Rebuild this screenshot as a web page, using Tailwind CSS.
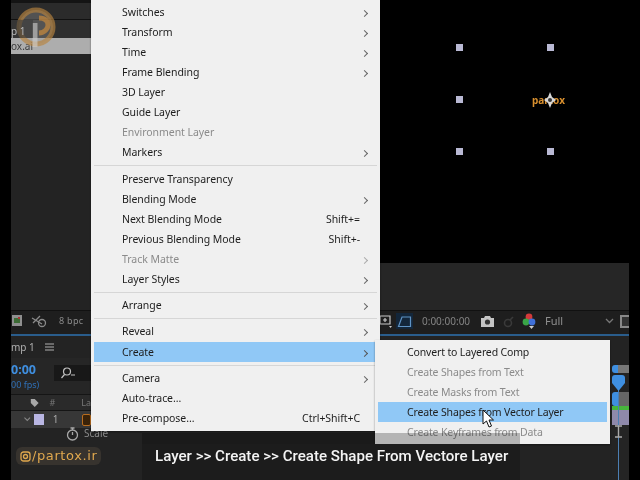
<!DOCTYPE html>
<html lang="en">
<head>
  <meta charset="UTF-8">
  <title>Layer menu</title>
  <script src="https://cdn.jsdelivr.net/npm/@tailwindcss/browser@4"></script>
</head>
<body class="bg-black">
<div class="relative w-[640px] h-[480px] overflow-hidden flex bg-black font-['Noto_Sans',sans-serif] blur-[0.3px]">
  <div class="w-[11px] shrink-0 bg-black"></div>

  <!-- After Effects window -->
  <div class="w-[618px] shrink-0 flex flex-col bg-[#232323]">
    <!-- Project panel + viewer -->
    <div class="h-[310px] flex">
      <div class="w-[80px] flex flex-col bg-[#232323]">
        <div class="h-[3px] bg-[#141414]"></div>
        <div class="h-[17px] bg-[#2b2b2b] border-b border-[#111]"></div>
        <div class="h-[18px] flex bg-[#2e2e2e]">
          <span class="relative z-10 w-[22px] bg-[#3b3b3b]/60 text-[10px] leading-[22px] text-[#bbb] whitespace-nowrap">p 1</span>
        </div>
        <div class="h-[16px] bg-[#adadad] text-[10px] leading-[17px] text-[#3c3c3c]">ox.ai</div>
      </div>
      <div class="flex-1 flex flex-col">
        <div class="relative h-[263px] bg-black">
          <div class="absolute left-[365px] top-[44px] w-[7px] h-[7px] bg-[#b9b9d4]"></div>
          <div class="absolute left-[456px] top-[44px] w-[7px] h-[7px] bg-[#b9b9d4]"></div>
          <div class="absolute left-[365px] top-[96px] w-[7px] h-[7px] bg-[#b9b9d4]"></div>
          <div class="absolute left-[365px] top-[148px] w-[7px] h-[7px] bg-[#b9b9d4]"></div>
          <div class="absolute left-[456px] top-[148px] w-[7px] h-[7px] bg-[#b9b9d4]"></div>
          <span class="absolute left-[441px] top-[93px] text-[10px] leading-[14px] font-bold text-[#d9902f]">partox</span>
          <svg class="absolute left-[453px] top-[92px]" width="12" height="16" viewBox="0 0 12 16"><path d="M6 0L8 5L12 8L8 11L6 16L4 11L0 8L4 5Z" fill="#d8d8d8"/><circle cx="6" cy="8" r="2" fill="#333"/></svg>
        </div>
        <div class="flex-1 bg-[#262626]"></div>
      </div>
    </div>

    <!-- Viewer toolbar -->
    <div class="h-[24px] flex items-center pb-[3px] bg-[#1e1e1e] border-t border-[#111] text-[#8a8a8a]">
      <div class="w-[80px] flex items-center">
        <svg width="19" height="14" viewBox="0 0 19 14"><rect x="1" y="1" width="10" height="11" fill="#8f8f8f"/><rect x="3" y="4" width="6" height="5" fill="#3c6b35"/><rect x="7" y="3" width="2" height="2" fill="#a33"/></svg>
        <svg width="17" height="14" viewBox="0 0 17 14" fill="none" stroke="#8a8a8a" stroke-width="1.3"><path d="M2 4l10 6M3 9l7-7"/><circle cx="12" cy="9" r="3.5"/></svg>
        <span class="ml-[12px] text-[9px] tracking-[0.3px] whitespace-nowrap">8 bpc</span>
      </div>
      <div class="ml-auto flex items-center h-full">
        <svg width="14" height="16" viewBox="0 0 14 16" fill="none" stroke="#c8c8c8" stroke-width="1.2"><path d="M1 3h10v8H1zM6 5v4M4 7h4"/><path d="M10 13h3l-1.5 2z" fill="#c8c8c8" stroke="none"/></svg>
        <div class="ml-[3px] w-[17px] h-[16px] bg-[#13263a] flex items-center justify-center">
          <svg width="15" height="13" viewBox="0 0 15 13" fill="none" stroke="#5f93c4" stroke-width="1.2"><path d="M1.5 11.5L5 2h8.5v9.500z"/></svg>
        </div>
        <span class="ml-[9px] w-[50px] text-[10px] text-[#838383] whitespace-nowrap">0:00:00:00</span>
        <svg class="ml-[8px]" width="15" height="13" viewBox="0 0 15 13"><path d="M1 3h3l1-2h5l1 2h3v9H1z" fill="#c4c4c4"/><circle cx="7.5" cy="7" r="2.6" fill="#333"/></svg>
        <svg class="ml-[8px]" width="13" height="13" viewBox="0 0 13 13" fill="none" stroke="#3a3a3a" stroke-width="1.6"><circle cx="5" cy="8" r="3.5"/><path d="M7 5l3-3"/></svg>
        <svg class="ml-[6px]" width="14" height="17" viewBox="0 0 14 17"><circle cx="7" cy="4" r="3.4" fill="#d33a3a"/><circle cx="4" cy="9" r="3.4" fill="#3aa547"/><circle cx="10" cy="9" r="3.4" fill="#3f6fd8"/><path d="M7 13h5l-2.5 3z" fill="#ccc"/></svg>
        <span class="ml-[9px] w-[60px] text-[11px] text-[#8f8f8f]">Full</span>
        <svg width="9" height="6" viewBox="0 0 9 6" fill="none" stroke="#777" stroke-width="1.3"><path d="M1 1l3.500 3.500L8 1"/></svg>
        <div class="ml-[6px] w-[9px] h-[13px] border-2 border-r-0 border-[#888] bg-[#333]"></div>
      </div>
    </div>
    <div class="h-[2px] bg-[#2a5d8c]"></div>

    <!-- Timeline panel -->
    <div class="flex-1 flex bg-[#232323]">
      <div class="w-[80px] flex flex-col shrink-0">
        <div class="h-[22px] flex items-center text-[10px] text-[#b0b0b0]">
          <span class="whitespace-nowrap">mp 1</span>
          <svg class="ml-[10px]" width="9" height="8" viewBox="0 0 9 8" stroke="#b0b0b0"><path d="M0 1h9M0 4h9M0 7h9"/></svg>
        </div>
        <div class="h-[36px] flex bg-[#262626]">
          <div class="w-[43px] flex flex-col">
            <span class="text-[12.5px] leading-[16px] mt-[4px] font-bold text-[#3f8fe0]">0:00</span>
            <span class="text-[9px] leading-[13px] text-[#2f6fb5] whitespace-nowrap">00 fps)</span>
          </div>
          <div class="mt-[7px] w-[37px] h-[16px] bg-[#181818] flex items-center pl-[6px]">
            <svg width="15" height="12" viewBox="0 0 15 12" fill="none" stroke="#c0c0c0" stroke-width="1.2"><circle cx="7" cy="4.500" r="3.500"/><path d="M4.500 7.500L1.500 11M11 8h4"/></svg>
          </div>
        </div>
        <div class="h-[17px] flex items-center bg-[#2a2a2a] border-y border-[#151515] text-[9px] text-[#777]">
          <svg class="ml-[19px]" width="12" height="12" viewBox="0 0 12 12"><path d="M1 1h5l5 5-5 5-5-5z" fill="#a8a8a8"/></svg>
          <span class="ml-[10px]">#</span>
          <span class="ml-[26px]">La</span>
        </div>
        <div class="h-[17px] flex items-center bg-[#373737]">
          <svg class="ml-[13px]" width="7" height="5" viewBox="0 0 7 5" fill="none" stroke="#888" stroke-width="1.1"><path d="M.5 .5l3 3 3-3"/></svg>
          <div class="ml-[3px] w-[11px] h-[11px] bg-[#b9b6e3]"></div>
          <span class="ml-[9px] text-[10px] text-[#aaa]">1</span>
          <div class="ml-[24px] w-[9px] h-[12px] rounded-[2px] bg-[#3a2208] border border-[#b86d1f]"></div>
        </div>
      </div>
      <div class="flex-1"></div>
      <div class="w-[17px] flex flex-col items-stretch relative">
        <div class="h-[29px]"></div>
        <div class="h-[8px] flex"><span class="w-[6px] bg-[#3f8fe0] rounded-l-[3px]"></span><span class="flex-1 bg-[#777]"></span></div>
        <div class="h-[19px]"></div>
        <div class="h-[14px] flex"><span class="w-[6px] bg-[#3f8fe0] rounded-l-[3px]"></span><span class="flex-1 bg-[#666]"></span></div>
        <div class="h-[4px] bg-[#47b53c]"></div>
        <div class="h-[15px] bg-[#8f89ab]"></div>
        <div class="flex-1 bg-[#242424]"></div>
        <div class="absolute left-[6px] top-[42px] bottom-0 w-[1px] bg-[#4c7fb3]"></div>
        <svg class="absolute left-0 top-[39px]" width="13" height="16" viewBox="0 0 13 16"><path d="M0 3q0-3 3-3h7q3 0 3 3v5L6.500 16 0 8z" fill="#3f8fe0"/></svg>
        <svg class="absolute left-[3px] top-[89px]" width="7" height="13" viewBox="0 0 7 13" fill="none" stroke="#aaa" stroke-width="1.400"><path d="M0 1h7M0 12h7M3.500 1v11"/></svg>
      </div>
    </div>
  </div>

  <div class="w-[11px] shrink-0 bg-black"></div>

  <!-- Scale row sits under the menu and pokes out below it -->
  <div class="absolute left-[66px] top-[426px] flex items-center text-[10px] text-[#8a8a8a]">
    <svg width="13" height="14" viewBox="0 0 13 14" fill="none" stroke="#a8a8a8" stroke-width="1.3"><circle cx="6.500" cy="8" r="5"/><path d="M6.500 1v2M4.500 1h4M6.500 5v3"/></svg>
    <span class="ml-[5px]">Scale</span>
  </div>

  <!-- Watermark -->
  <svg class="absolute left-[15px] top-[6px] blur-[0.7px]" width="42" height="42" viewBox="0 0 42 42" fill="none">
    <circle cx="21" cy="21" r="17" fill="#9a9a9a" fill-opacity=".35"/>
    <circle cx="21" cy="21" r="17" stroke="#b8843f" stroke-opacity=".65" stroke-width="5"/>
    <path d="M20 17v24" stroke="#d0d0d0" stroke-opacity=".6" stroke-width="5"/>
    <path d="M24 12c7 0 9 4 9 7s-3 8-9 8" stroke="#c98a3c" stroke-opacity=".7" stroke-width="5"/>
  </svg>

  <!-- Layer menu -->
  <div class="absolute left-[91px] top-0 w-[289px] h-[431px] pt-[2px] px-[3px] bg-[#f0f0f0] text-[10.5px] tracking-[-0.05px] text-[#1d1d1d] shadow-[0_1px_2px_rgba(0,0,0,.4)]">
    <div class="h-5 pt-[2px] flex items-center pl-[28px] pr-[10px]"><span class="flex-1">Switches</span><span class="w-[5px] h-[5px] rotate-45 border-t border-r border-[#666]"></span></div>
    <div class="h-5 pt-[2px] flex items-center pl-[28px] pr-[10px]"><span class="flex-1">Transform</span><span class="w-[5px] h-[5px] rotate-45 border-t border-r border-[#666]"></span></div>
    <div class="h-5 pt-[2px] flex items-center pl-[28px] pr-[10px]"><span class="flex-1">Time</span><span class="w-[5px] h-[5px] rotate-45 border-t border-r border-[#666]"></span></div>
    <div class="h-5 pt-[2px] flex items-center pl-[28px] pr-[10px]"><span class="flex-1">Frame Blending</span><span class="w-[5px] h-[5px] rotate-45 border-t border-r border-[#666]"></span></div>
    <div class="h-5 pt-[2px] flex items-center pl-[28px] pr-[10px]"><span class="flex-1">3D Layer</span></div>
    <div class="h-5 pt-[2px] flex items-center pl-[28px] pr-[10px]"><span class="flex-1">Guide Layer</span></div>
    <div class="h-5 pt-[2px] flex items-center pl-[28px] pr-[10px] text-[#8b8b8b]"><span class="flex-1">Environment Layer</span></div>
    <div class="h-5 pt-[2px] flex items-center pl-[28px] pr-[10px]"><span class="flex-1">Markers</span><span class="w-[5px] h-[5px] rotate-45 border-t border-r border-[#666]"></span></div>
    <div class="h-[7px] flex items-center"><div class="w-full h-[1px] bg-[#d6d6d6]"></div></div>
    <div class="h-5 pt-[2px] flex items-center pl-[28px] pr-[10px]"><span class="flex-1">Preserve Transparency</span></div>
    <div class="h-5 pt-[2px] flex items-center pl-[28px] pr-[10px]"><span class="flex-1">Blending Mode</span><span class="w-[5px] h-[5px] rotate-45 border-t border-r border-[#666]"></span></div>
    <div class="h-5 pt-[2px] flex items-center pl-[28px] pr-[17px]"><span class="flex-1">Next Blending Mode</span><span>Shift+=</span></div>
    <div class="h-5 pt-[2px] flex items-center pl-[28px] pr-[17px]"><span class="flex-1">Previous Blending Mode</span><span>Shift+-</span></div>
    <div class="h-5 pt-[2px] flex items-center pl-[28px] pr-[10px] text-[#8b8b8b]"><span class="flex-1">Track Matte</span><span class="w-[5px] h-[5px] rotate-45 border-t border-r border-[#aaa]"></span></div>
    <div class="h-5 pt-[2px] flex items-center pl-[28px] pr-[10px]"><span class="flex-1">Layer Styles</span><span class="w-[5px] h-[5px] rotate-45 border-t border-r border-[#666]"></span></div>
    <div class="h-[6px] flex items-center"><div class="w-full h-[1px] bg-[#d6d6d6]"></div></div>
    <div class="h-5 pt-[2px] flex items-center pl-[28px] pr-[10px]"><span class="flex-1">Arrange</span><span class="w-[5px] h-[5px] rotate-45 border-t border-r border-[#666]"></span></div>
    <div class="h-[6px] flex items-center"><div class="w-full h-[1px] bg-[#d6d6d6]"></div></div>
    <div class="h-5 pt-[2px] flex items-center pl-[28px] pr-[10px]"><span class="flex-1">Reveal</span><span class="w-[5px] h-[5px] rotate-45 border-t border-r border-[#666]"></span></div>
    <div class="h-[1px]"></div>
    <div class="h-5 pt-[2px] flex items-center pl-[28px] pr-[10px] bg-[#90c8f6]"><span class="flex-1">Create</span><span class="w-[5px] h-[5px] rotate-45 border-t border-r border-[#555]"></span></div>
    <div class="h-[6px] flex items-center"><div class="w-full h-[1px] bg-[#d6d6d6]"></div></div>
    <div class="h-5 pt-[2px] flex items-center pl-[28px] pr-[10px]"><span class="flex-1">Camera</span><span class="w-[5px] h-[5px] rotate-45 border-t border-r border-[#666]"></span></div>
    <div class="h-5 pt-[2px] flex items-center pl-[28px] pr-[10px]"><span class="flex-1">Auto-trace...</span></div>
    <div class="h-5 pt-[2px] flex items-center pl-[28px] pr-[17px]"><span class="flex-1">Pre-compose...</span><span>Ctrl+Shift+C</span></div>
  </div>

  <!-- Create submenu -->
  <div class="absolute left-[375px] top-[340px] w-[235px] h-[104px] pt-[2px] px-[3px] bg-[#f0f0f0] text-[10.5px] tracking-[-0.15px] text-[#1d1d1d] shadow-[0_1px_2px_rgba(0,0,0,.4)]">
    <div class="h-5 pt-[1px] flex items-center pl-[29px]">Convert to Layered Comp</div>
    <div class="h-5 pt-[1px] flex items-center pl-[29px] text-[#8b8b8b]">Create Shapes from Text</div>
    <div class="h-5 pt-[1px] flex items-center pl-[29px] text-[#8b8b8b]">Create Masks from Text</div>
    <div class="h-5 pt-[1px] flex items-center pl-[29px] bg-[#90c8f6]">Create Shapes from Vector Layer</div>
    <div class="h-5 pt-[1px] flex items-center pl-[29px] text-[#8b8b8b]">Create Keyframes from Data</div>
  </div>

  <!-- Mouse cursor -->
  <svg class="absolute left-[482px] top-[409px]" width="13" height="19" viewBox="0 0 13 19"><path d="M1 1v14l3.500-3 2.500 6 2.500-1-2.500-6h4.500z" fill="#fff" stroke="#111" stroke-width="1"/></svg>

  <!-- Caption -->
  <div class="absolute left-[142px] top-[433px] w-[378px] h-[47px] bg-black/25">
    <div class="mt-[11px] h-[36px] bg-[#1c1c1c] flex pl-[13px] pt-[1px]">
      <span class="text-[15.1px] leading-[22px] font-medium text-[#f4f4f4] font-['Roboto',sans-serif] whitespace-nowrap">Layer &gt;&gt; Create &gt;&gt; Create Shape From Vectore Layer</span>
    </div>
  </div>

  <!-- Handle badge -->
  <div class="absolute left-[16px] top-[447px] w-[85px] h-[18px] rounded-[6px] bg-[#37332e] flex items-center pl-[4px] text-[13px] tracking-[0.6px] text-[#e0a84e] font-['DejaVu_Sans',sans-serif]">
    <svg width="11" height="11" viewBox="0 0 11 11" fill="none" stroke="#e0a84e" stroke-width="1.300"><rect x="1" y="1" width="9" height="9" rx="2.500"/><circle cx="5.500" cy="5.500" r="2"/></svg>
    <span class="ml-[1px]">/partox.ir</span>
  </div>
</div>
</body>
</html>
